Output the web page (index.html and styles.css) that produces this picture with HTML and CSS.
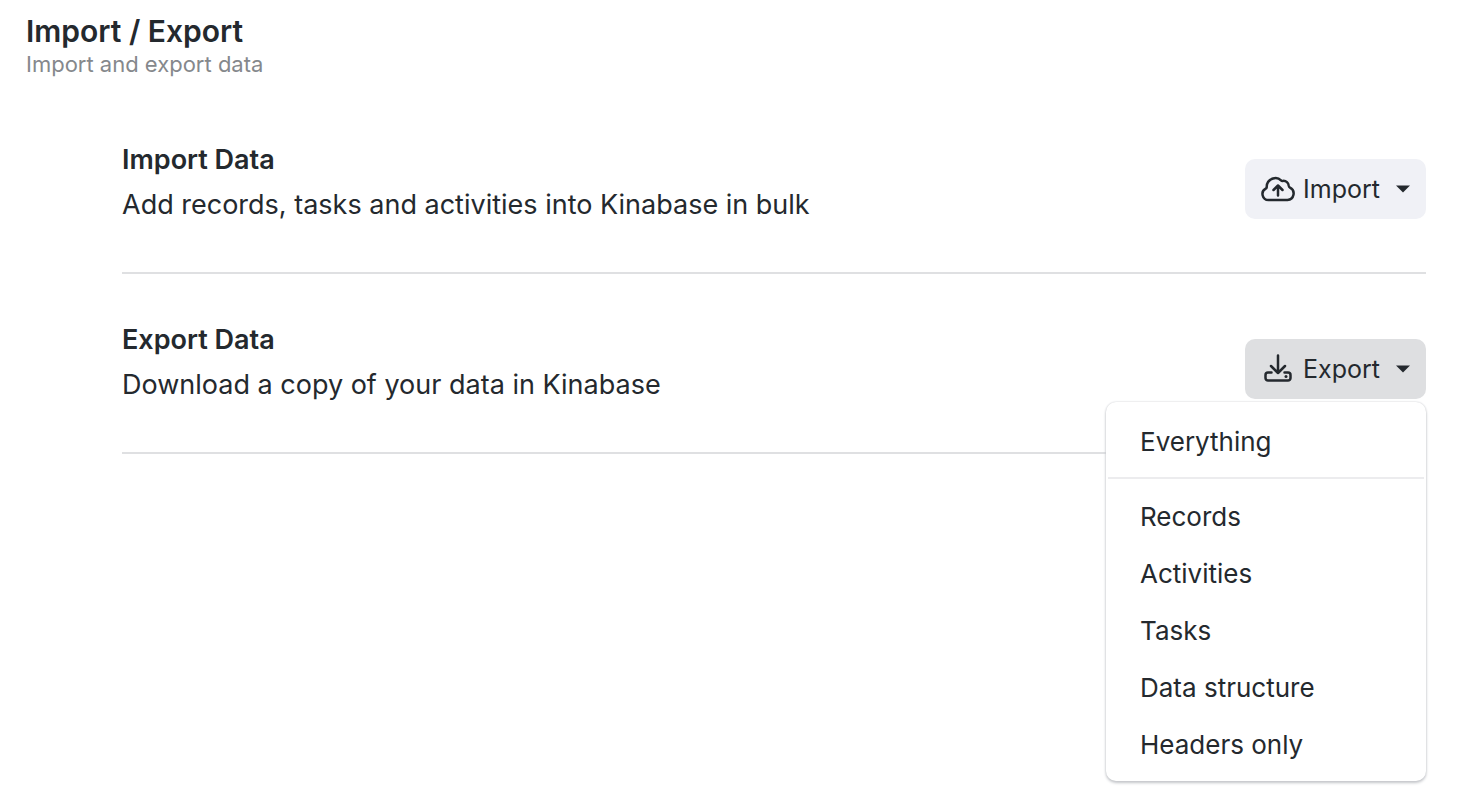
FILE: index.html
```html
<!DOCTYPE html>
<html lang="en">
<head>
<meta charset="utf-8">
<meta name="viewport" content="width=device-width, initial-scale=1">
<title>Import / Export</title>
<link rel="stylesheet" href="styles.css">
</head>
<body>
<main class="page">
  <header class="page-header">
    <h1 class="page-title">Import / Export</h1>
    <p class="page-subtitle">Import and export data</p>
  </header>
  <div class="settings">
    <section class="setting">
      <div class="setting-text">
        <h2 class="setting-title">Import Data</h2>
        <p class="setting-desc">Add records, tasks and activities into Kinabase in bulk</p>
      </div>
      <div class="dropdown">
        <button class="btn" type="button" aria-haspopup="menu" aria-expanded="false">
          <svg class="icon" viewBox="0 0 34 34" aria-hidden="true"><path d="M7.500 28a6 6 0 0 1-2.800-11.300c.6-.3.9-.8 1-1.500A9 9 0 0 1 12 6.500c3-1 6-.2 8 1.800.6.600 1.300.700 2 .600 3-.3 5.600 2 5.800 5 .1.800.500 1.400 1.200 1.800A6.500 6.500 0 0 1 26.500 28ZM17 23.500V13.500M12.500 18 17 13.500 21.500 18"/></svg>
          <span class="btn-label">Import</span>
          <svg class="caret" viewBox="0 0 14 8" aria-hidden="true"><path d="M0 .5h14L7 7.500Z"/></svg>
        </button>
      </div>
    </section>
    <section class="setting">
      <div class="setting-text">
        <h2 class="setting-title">Export Data</h2>
        <p class="setting-desc">Download a copy of your data in Kinabase</p>
      </div>
      <div class="dropdown">
        <button class="btn btn-active" type="button" aria-haspopup="menu" aria-expanded="true">
          <svg class="icon" viewBox="0 0 34 34" aria-hidden="true"><path d="M17 3.500v17.500M10 14l7 7 7-7M10.500 20.500H7a2.500 2.500 0 0 0-2.500 2.500v3A2.500 2.500 0 0 0 7 28.500h20a2.500 2.500 0 0 0 2.500-2.500v-3a2.500 2.500 0 0 0-2.500-2.500h-3.500"/><circle class="dot" cx="25" cy="24.500" r="1.500"/></svg>
          <span class="btn-label">Export</span>
          <svg class="caret" viewBox="0 0 14 8" aria-hidden="true"><path d="M0 .5h14L7 7.500Z"/></svg>
        </button>
        <div class="menu" role="menu">
          <button class="menu-item" type="button" role="menuitem">Everything</button>
          <hr class="menu-divider">
          <button class="menu-item" type="button" role="menuitem">Records</button>
          <button class="menu-item" type="button" role="menuitem">Activities</button>
          <button class="menu-item" type="button" role="menuitem">Tasks</button>
          <button class="menu-item" type="button" role="menuitem">Data structure</button>
          <button class="menu-item" type="button" role="menuitem">Headers only</button>
        </div>
      </div>
    </section>
  </div>
</main>
</body>
</html>
```
FILE: styles.css
```css
* {
  box-sizing: border-box;
}

body {
  margin: 0;
  background: #fff;
  color: #24292e;
  font-family: Inter, "Liberation Sans", sans-serif;
  font-size: 26px;
}

h1, h2, p {
  margin: 0;
}

.page {
  min-height: 100vh;
  padding: 12px 46px 24px 26px;
}

.page-title {
  font-size: 30px;
  line-height: 38px;
  font-weight: 600;
}

.page-subtitle {
  font-size: 22px;
  line-height: 28px;
  color: #85888c;
}

.settings {
  margin: 16px 0 0 96px;
}

.setting {
  display: flex;
  justify-content: space-between;
  align-items: flex-end;
  padding: 50px 0 53px;
  border-bottom: 2px solid #dfe0e2;
}

.setting-text {
  display: grid;
  gap: 15px;
}

.setting-title {
  font-size: 27px;
  line-height: 32px;
  font-weight: 600;
}

.setting-desc {
  font-size: 27px;
  line-height: 28px;
}

.dropdown {
  position: relative;
}

.btn {
  display: flex;
  align-items: center;
  gap: 8px;
  height: 60px;
  padding: 0 16px;
  border: 0;
  border-radius: 10px;
  background: #f0f1f6;
  color: inherit;
  font: inherit;
  font-size: 25px;
}

.btn-active {
  background: #dedfe1;
}

.icon {
  width: 34px;
  height: 34px;
  fill: none;
  stroke: currentColor;
  stroke-width: 2.5;
  stroke-linecap: round;
  stroke-linejoin: round;
}

.dot {
  fill: currentColor;
  stroke: none;
}

.caret {
  width: 14px;
  height: 8px;
  margin-left: 8px;
  fill: currentColor;
}

.menu {
  position: absolute;
  top: 63px;
  right: 0;
  width: 320px;
  padding: 11px 2px 8px;
  border-radius: 10px;
  background: #fff;
  box-shadow: 0 0 2px #c9cbcf, 0 2px 3px #c4c6ca;
}

.menu-item {
  display: block;
  width: 100%;
  padding: 0 32px;
  border: 0;
  background: none;
  color: inherit;
  font: inherit;
  line-height: 57px;
  text-align: left;
}

.menu-divider {
  height: 2px;
  margin: 7px 0 9px;
  border: 0;
  background: #ececee;
}
```
